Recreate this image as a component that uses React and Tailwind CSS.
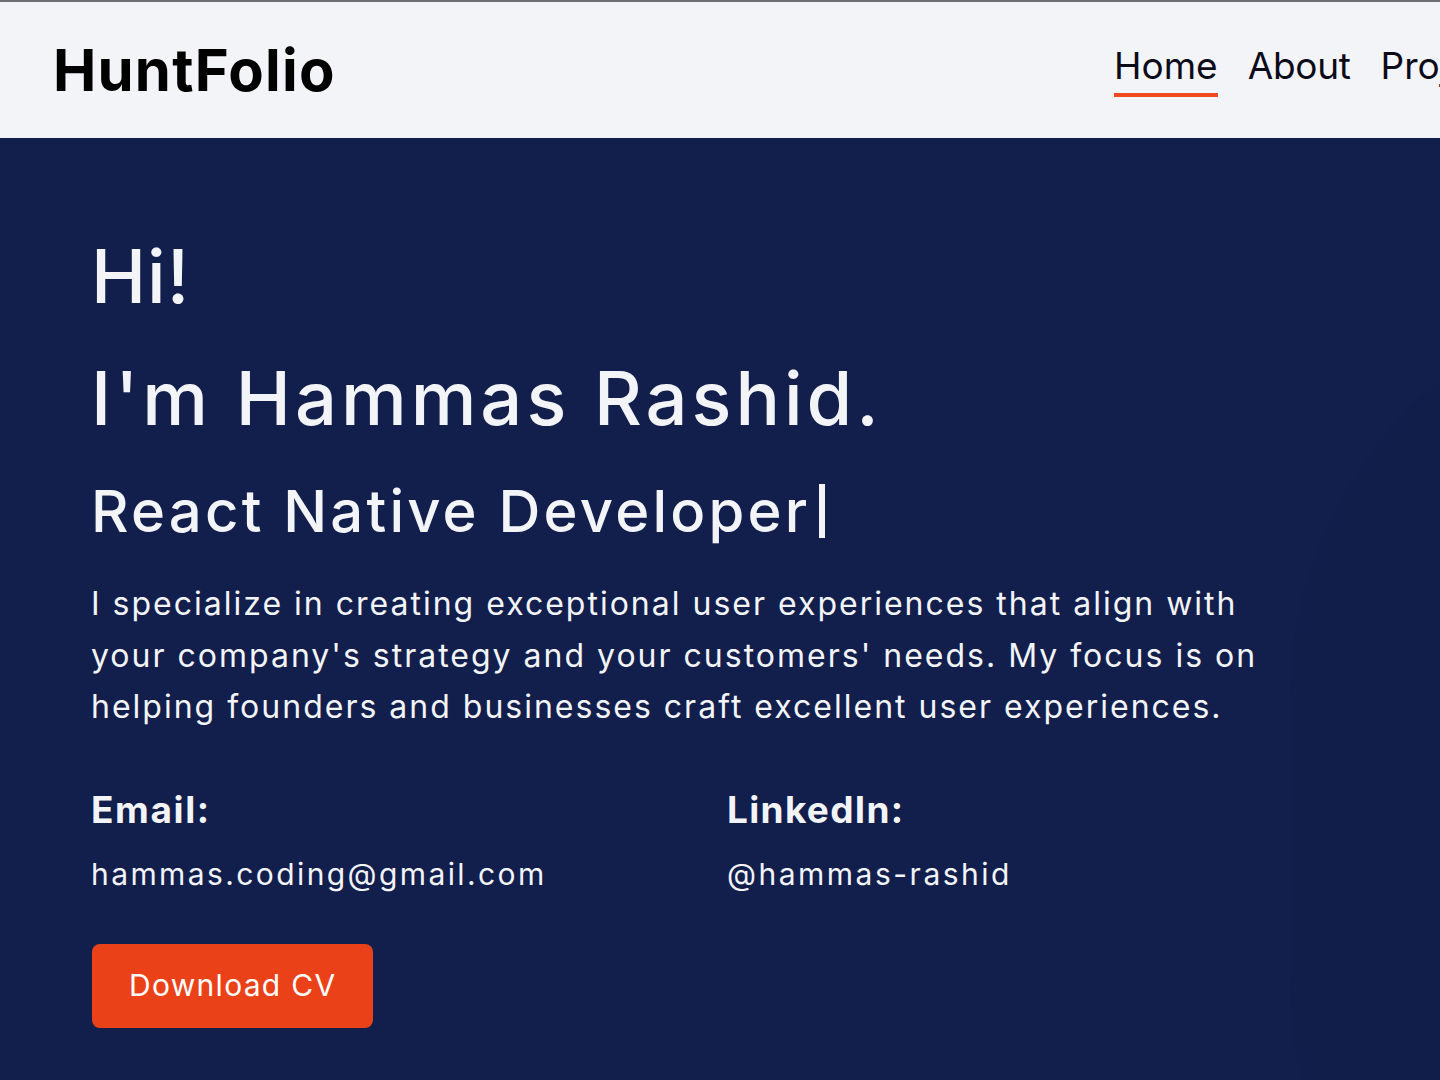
import React from "react";

export default function App() {
  const font = { fontFamily: "Inter, 'Noto Sans', sans-serif" };
  return (
    <div style={font} className="w-[1440px] h-[1080px] overflow-hidden bg-[#121f4c] font-['Inter',sans-serif]">
      <header className="h-[138px] border-t-2 border-[#6d6f74] bg-[#f3f4f8] flex items-center overflow-hidden pl-[53px]">
        <div className="w-[1061px] shrink-0 text-[58px] leading-[70px] font-bold text-black tracking-[1.2px]">
          HuntFolio
        </div>
        <nav className="flex shrink-0 gap-[30px] text-[37px] text-[#0b0b1a]">
          <div className="flex flex-col">
            <span className="leading-[44px]">Home</span>
            <span className="mt-[5px] h-[4px] bg-[#f04a1d]"></span>
          </div>
          <div className="flex flex-col">
            <span className="leading-[44px] tracking-[-0.3px]">About</span>
            <span className="mt-[5px] h-[4px]"></span>
          </div>
          <div className="flex flex-col">
            <span className="leading-[44px]">Projects</span>
            <span className="mt-[5px] h-[4px]"></span>
          </div>
          <div className="flex flex-col">
            <span className="leading-[44px]">Contact</span>
            <span className="mt-[5px] h-[4px]"></span>
          </div>
        </nav>
      </header>

      <main className="relative h-[942px] overflow-hidden">
        <div className="absolute left-[1290px] top-[150px] w-[820px] h-[1100px] rounded-full bg-[#111e4a]"></div>
        <div className="relative pl-[91px] pt-[93px] text-[#f3f4f8]">
          <h1 className="text-[74px] leading-[90px] font-medium tracking-[1px]">Hi!</h1>
          <h2 className="mt-[32px] text-[74px] leading-[90px] font-medium tracking-[4px]">I'm Hammas Rashid.</h2>
          <h3 className="mt-[33px] text-[58px] leading-[70px] font-medium tracking-[3.2px] flex items-center">
            React Native Developer
            <span className="ml-[9px] inline-block w-[6px] h-[54px] bg-[#f3f4f8]"></span>
          </h3>
          <p className="mt-[32px] text-[32px] leading-[51.5px] tracking-[2px]">
            I specialize in creating exceptional user experiences that align with
            <br />
            your company's strategy and your customers' needs. My focus is on
            <br />
            helping founders and businesses craft excellent user experiences.
          </p>
          <div className="mt-[54px] grid grid-cols-2 w-[1272px]">
            <div>
              <div className="text-[37px] leading-[45px] font-bold tracking-[1.6px]">Email:</div>
              <div className="mt-[25px] text-[30px] leading-[34px] tracking-[2.4px]">hammas.coding@gmail.com</div>
            </div>
            <div>
              <div className="text-[37px] leading-[45px] font-bold tracking-[1.3px]">LinkedIn:</div>
              <div className="mt-[25px] text-[30px] leading-[34px] tracking-[2.5px]">@hammas-rashid</div>
            </div>
          </div>
          <button className="mt-[53px] ml-[1px] h-[84px] px-[37px] rounded-[8px] bg-[#eb4119] text-white text-[30px] tracking-[1.3px] flex items-center">
            Download CV
          </button>
        </div>
      </main>
    </div>
  );
}
